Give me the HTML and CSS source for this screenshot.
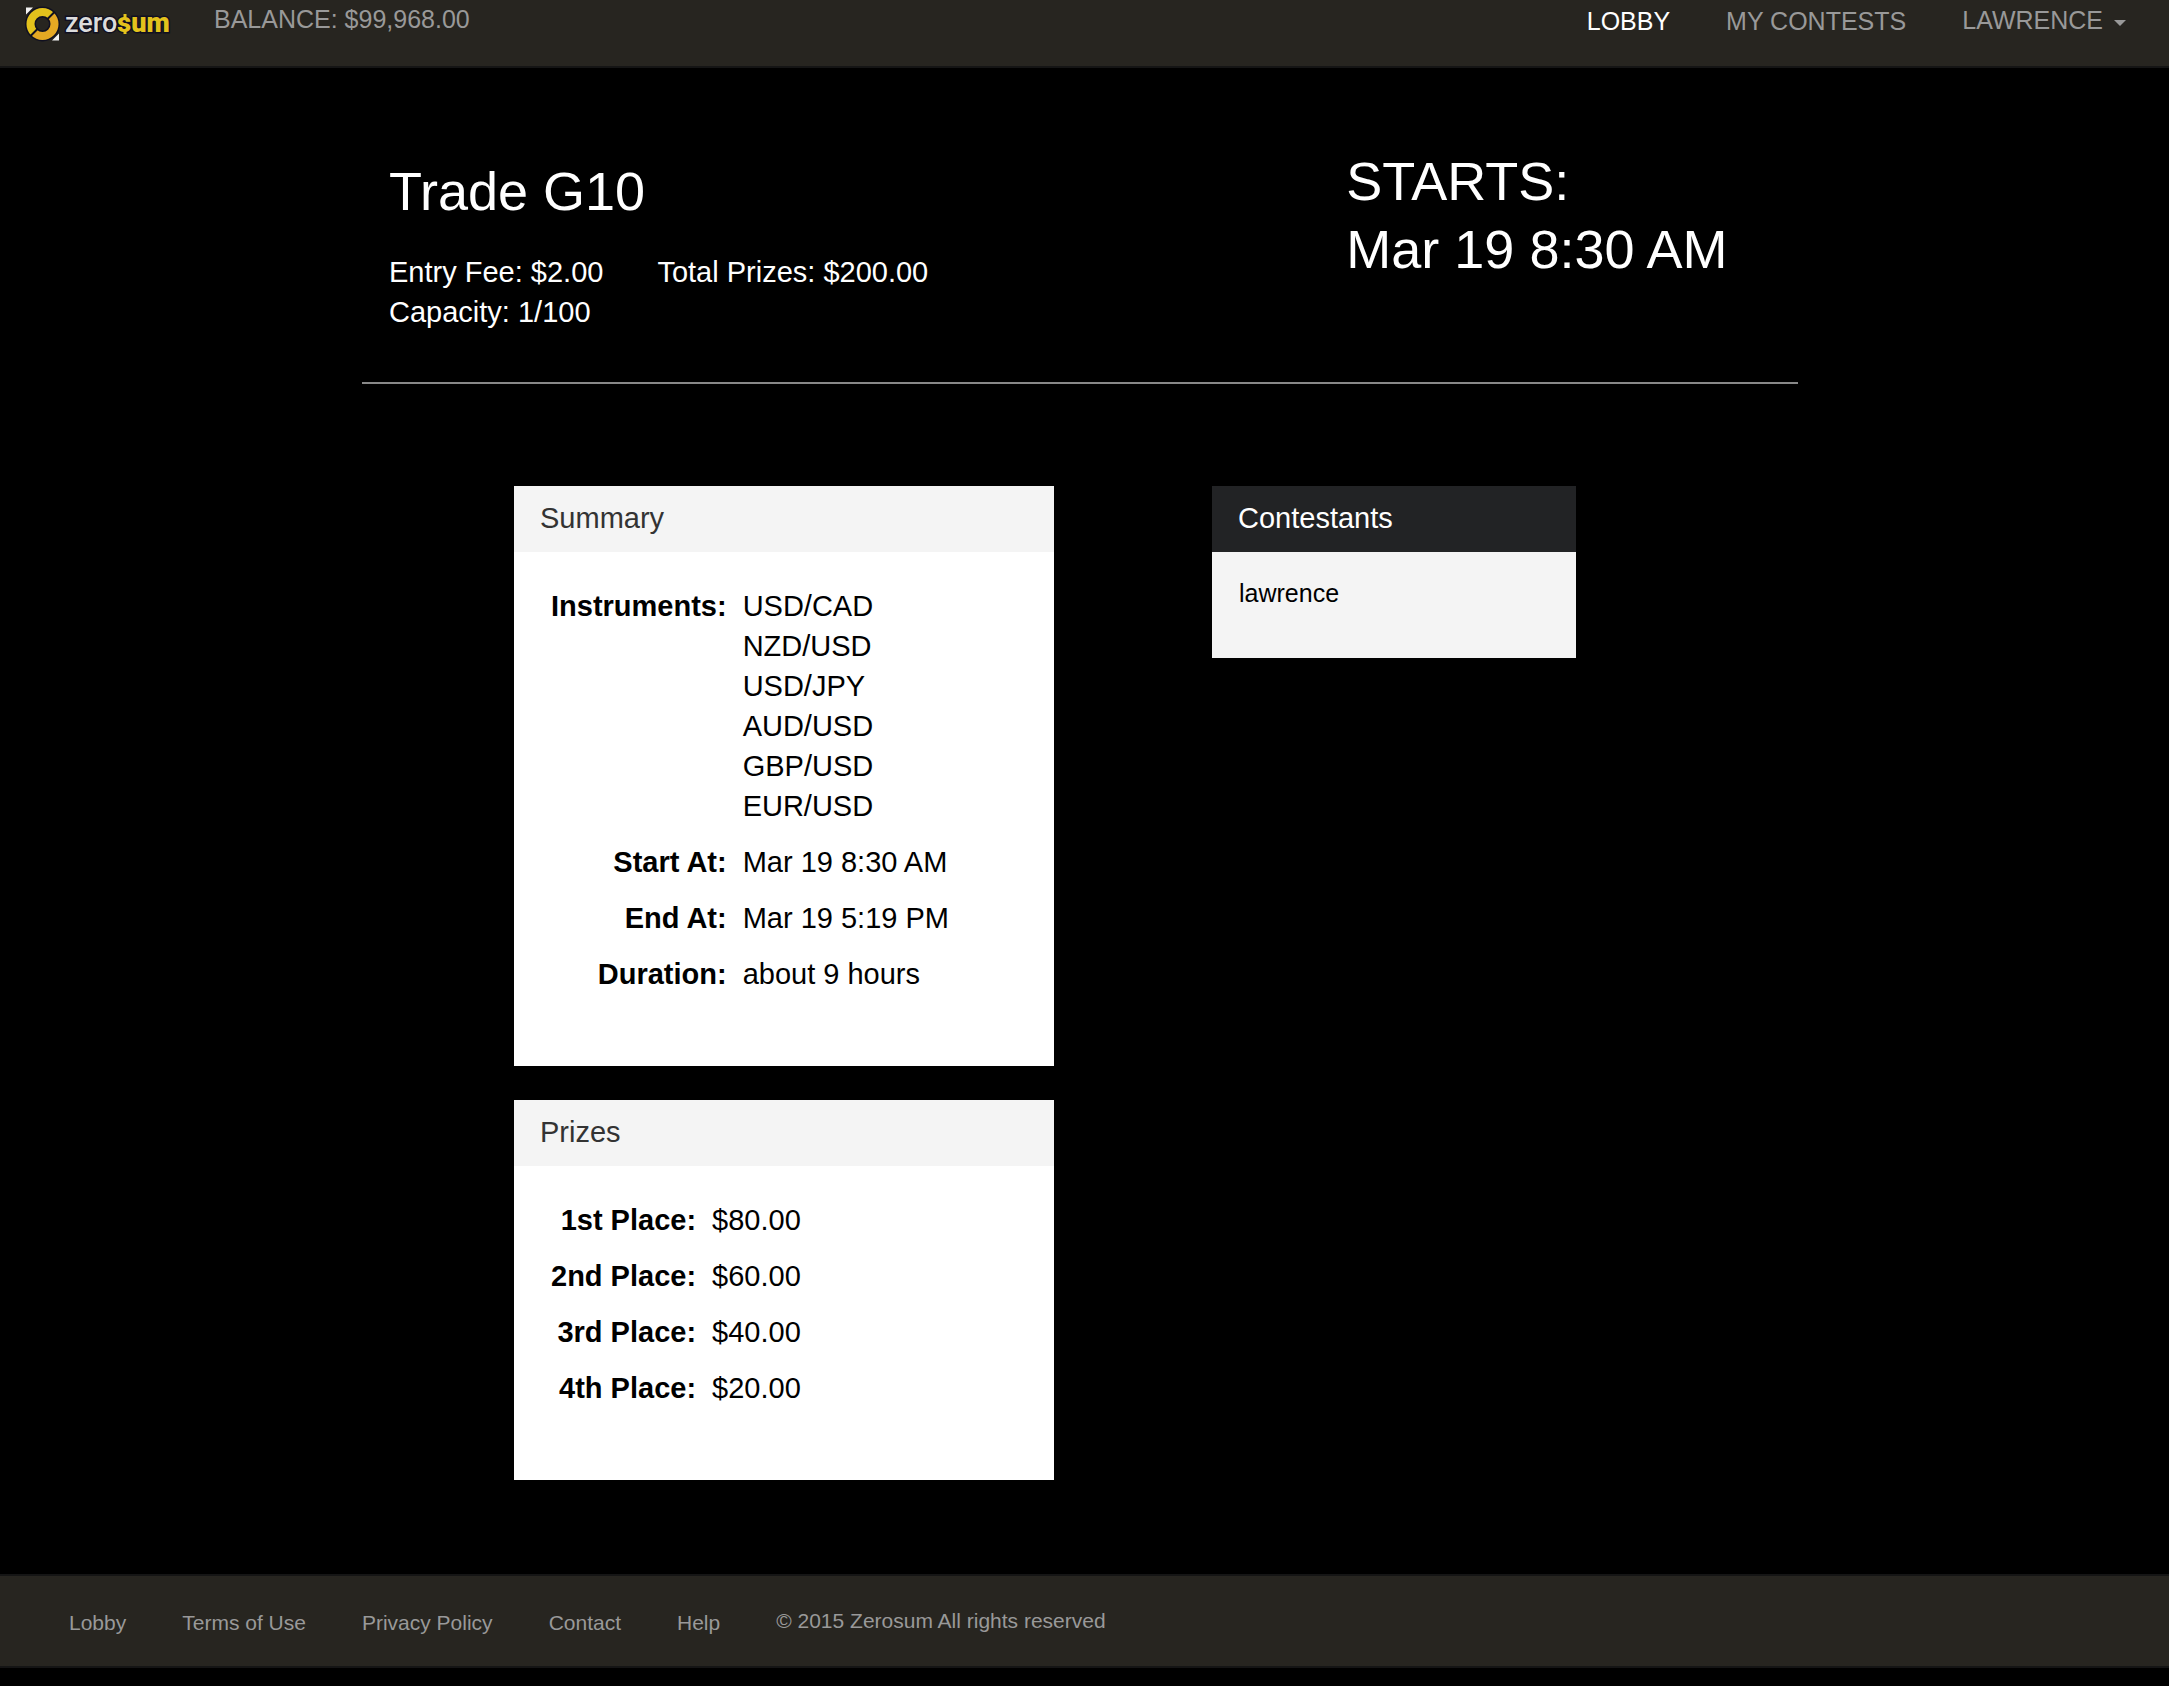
FILE: index.html
```html
<!DOCTYPE html>
<html lang="en">
<head>
<meta charset="utf-8">
<title>Zerosum - Trade G10</title>
<link rel="stylesheet" href="styles.css">
</head>
<body>
<header class="navbar">
  <a class="brand" href="#" aria-label="Zerosum">
    <svg class="logo" width="160" height="48" viewBox="0 0 160 48">
      <circle cx="29.500" cy="24" r="12" fill="none" stroke="#101020" stroke-width="11"/>
      <path d="M13 7.500h7l-7 7zM46 40.500v-7l-7 7z" fill="#f2f2f2"/>
      <path d="M21 32.500A12 12 0 0 1 38 15.500" fill="none" stroke="#e3c21c" stroke-width="8"/>
      <path d="M38 15.500A12 12 0 0 1 21 32.500" fill="none" stroke="#e5a823" stroke-width="8"/>
      <path d="M34 19.500l7.500-7.500M25 28.500l-7.500 7.500" stroke="#101020" stroke-width="2"/>
      <text class="logo-text" x="52" y="32"><tspan fill="#dcdcdc">zero</tspan><tspan class="logo-bold" fill="#e3c21c">sum</tspan></text>
      <path d="M112 14v4M112 30v4" stroke="#e3c21c" stroke-width="3"/>
    </svg>
  </a>
  <p class="balance">BALANCE: $99,968.00</p>
  <nav class="menu">
    <a class="menu-item active" href="#">LOBBY</a>
    <a class="menu-item" href="#">MY CONTESTS</a>
    <button class="menu-item menu-user" type="button">LAWRENCE<span class="caret"></span></button>
  </nav>
</header>

<main class="page">
  <div class="container">
    <section class="contest-head">
      <div class="contest-info">
        <h1 class="title">Trade G10</h1>
        <div class="facts">
          <span>Entry Fee: $2.00</span>
          <span>Total Prizes: $200.00</span>
        </div>
        <div class="facts">Capacity: 1/100</div>
      </div>
      <div class="starts">STARTS:<br>Mar 19 8:30 AM</div>
    </section>

    <div class="panels">
      <div class="column">
        <section class="panel">
          <h2 class="panel-heading">Summary</h2>
          <div class="panel-body">
            <table class="details">
              <tr><th scope="row">Instruments:</th><td>USD/CAD<br>NZD/USD<br>USD/JPY<br>AUD/USD<br>GBP/USD<br>EUR/USD</td></tr>
              <tr><th scope="row">Start At:</th><td>Mar 19 8:30 AM</td></tr>
              <tr><th scope="row">End At:</th><td>Mar 19 5:19 PM</td></tr>
              <tr><th scope="row">Duration:</th><td>about 9 hours</td></tr>
            </table>
          </div>
        </section>
        <section class="panel">
          <h2 class="panel-heading">Prizes</h2>
          <div class="panel-body">
            <table class="details">
              <tr><th scope="row">1st Place:</th><td>$80.00</td></tr>
              <tr><th scope="row">2nd Place:</th><td>$60.00</td></tr>
              <tr><th scope="row">3rd Place:</th><td>$40.00</td></tr>
              <tr><th scope="row">4th Place:</th><td>$20.00</td></tr>
            </table>
          </div>
        </section>
      </div>
      <div class="column">
        <section class="panel panel-dark">
          <h2 class="panel-heading">Contestants</h2>
          <ul class="contestants"><li>lawrence</li></ul>
        </section>
      </div>
    </div>
  </div>
</main>

<footer class="footer">
  <nav class="footer-links">
    <a href="#">Lobby</a>
    <a href="#">Terms of Use</a>
    <a href="#">Privacy Policy</a>
    <a href="#">Contact</a>
    <a href="#">Help</a>
  </nav>
  <p class="copyright">© 2015 Zerosum All rights reserved</p>
</footer>
</body>
</html>
```
FILE: styles.css
```css
* { box-sizing: border-box; }

body {
  margin: 0;
  background: #000;
  color: #000;
  font-family: "Liberation Sans", Arial, sans-serif;
  font-size: 29px;
  line-height: 40px;
}

h1, h2, p, ul { margin: 0; padding: 0; font-weight: normal; }

a { color: inherit; text-decoration: none; }

.navbar {
  display: flex;
  align-items: flex-start;
  padding: 0 43px 0 13px;
  min-height: 68px;
  background: #272520;
  border-bottom: 2px solid #151515;
  color: #999;
  font-size: 25px;
  line-height: 36px;
}

.logo { display: block; }

.logo-text { font-family: Roboto, sans-serif; font-size: 27px; font-weight: 500; stroke: #101020; stroke-width: 3px; paint-order: stroke; }

.logo-bold { font-weight: 900; }

.balance { margin-left: 41px; padding-top: 1px; }

.menu { display: flex; gap: 56px; margin-left: auto; padding-top: 3px; }

.menu-item.active { color: #fff; }

.menu-user {
  display: flex;
  align-items: center;
  gap: 11px;
  height: 34px;
  padding: 0;
  border: 0;
  background: none;
  color: inherit;
  font: inherit;
}

.caret {
  border-top: 6px solid #999;
  border-left: 6px solid transparent;
  border-right: 6px solid transparent;
  margin-top: 6px;
}

.page { padding: 79px 9px 94px 0; }

.container { max-width: 1436px; margin: 0 auto; }

.contest-head {
  display: grid;
  grid-template-columns: 2fr 1fr;
  padding-bottom: 50px;
  border-bottom: 2px solid #888;
  color: #fff;
}

.contest-info { padding: 14px 27px 0; }

.title { margin-bottom: 31px; font-size: 54px; line-height: 60px; }

.facts { display: flex; gap: 54px; }

.starts { padding: 0 27px; font-size: 54px; line-height: 68px; }

.panels {
  display: grid;
  grid-template-columns: minmax(0, 540px) minmax(0, 364px);
  column-gap: 158px;
  align-items: start;
  padding: 102px 0 0 152px;
}

.column { display: grid; gap: 34px; }

.panel { background: #fff; }

.panel-heading {
  padding: 12px 26px 14px;
  background: #f4f4f4;
  color: #333;
  font-size: 29px;
  line-height: 40px;
}

.panel-body { padding: 26px 29px 64px; }

.details { border-collapse: collapse; }

.details th, .details td { padding: 8px; vertical-align: top; }

.details th { text-align: right; }

.panel-dark { background: #f4f4f4; }

.panel-dark .panel-heading { background: #222325; color: #fff; }

.contestants { padding: 23px 27px 47px; list-style: none; font-size: 25px; line-height: 36px; }

.footer {
  display: flex;
  gap: 56px;
  padding: 30px 69px 28px;
  background: #272520;
  border: solid #151515;
  border-width: 2px 0;
  color: #999;
  font-size: 21px;
  line-height: 30px;
}

.footer-links { display: flex; gap: 56px; padding-top: 2px; }
```
